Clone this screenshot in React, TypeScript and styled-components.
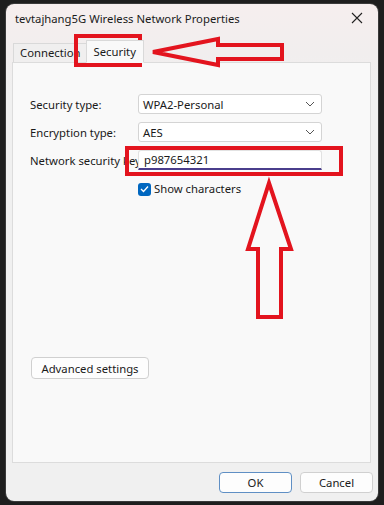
import * as React from 'react';
import styled, {createGlobalStyle} from 'styled-components';

const GlobalStyle = createGlobalStyle`
html, body {
    margin: 0;
    padding: 0;
    background: #1e1e1e;
}
body {
    font-family: "Noto Sans", "Open Sans", sans-serif;
    font-size: 11.3px;
    color: #1a1a1a;
}
`

const Screen = styled.div`
position: relative;
width: 384px;
height: 505px;
padding: 4px 6px 4px 6px;
box-sizing: border-box;
`

const Window = styled.div`
width: 372px;
height: 497px;
border-radius: 8px;
overflow: hidden;
display: flex;
flex-direction: column;
background: linear-gradient(#f6eeee 0px, #f1eeee 50px, #f0f0f0 90px);
box-shadow: 0 0 0 1px #3a3a3a;
`

const TitleBar = styled.div`
height: 28px;
display: flex;
align-items: center;
justify-content: space-between;
padding: 0 15px 0 9px;
flex-shrink: 0;
`

const Title = styled.div`
font-size: 11.3px;
color: #1b1b1b;
white-space: nowrap;
`

const TabRow = styled.div`
display: flex;
align-items: flex-end;
height: 30px;
padding-left: 7px;
flex-shrink: 0;
`

const Tab = styled.div<{active?: boolean}>`
box-sizing: border-box;
height: ${p => p.active ? 23 : 19}px;
padding: ${p => p.active ? '3px 7px 0 7px' : '1px 5px 0 6px'};
background: ${p => p.active ? '#f9f9f9' : '#f0efef'};
border: 1px solid #d9d9d9;
border-bottom: ${p => p.active ? '1px solid #f9f9f9' : 'none'};
margin-bottom: ${p => p.active ? -1 : 0}px;
margin-left: ${p => p.active ? -1 : 0}px;
position: relative;
z-index: ${p => p.active ? 1 : 0};
font-size: 11.3px;
color: #1a1a1a;
`

const Panel = styled.div`
flex: 1;
margin: 0 7px 0 6px;
background: #f9f9f9;
border: 1px solid #dcdcdc;
padding: 31px 0 0 17px;
display: flex;
flex-direction: column;
`

const Form = styled.div`
display: grid;
grid-template-columns: 108px 184px;
row-gap: 8px;
align-items: center;
`

const Label = styled.div`
white-space: nowrap;
overflow: hidden;
font-size: 11.3px;
`

const Select = styled.div`
box-sizing: border-box;
height: 20px;
background: #ffffff;
border: 1px solid #d4d4d4;
border-radius: 3px;
display: flex;
align-items: center;
justify-content: space-between;
padding: 0 6px 0 4px;
font-size: 11.3px;
`

const KeyInput = styled.div`
box-sizing: border-box;
height: 20px;
background: #ffffff;
border: 1px solid #e2e2e2;
border-bottom: 2px solid #4a3d8c;
border-radius: 3px 3px 0 0;
display: flex;
align-items: center;
padding: 0 5px;
font-size: 11.3px;
`

const CheckRow = styled.label`
display: flex;
align-items: center;
gap: 3px;
height: 16px;
line-height: 16px;
margin: 11px 0 0 108px;
font-size: 11.3px;
`

const CheckBox = styled.span`
width: 13px;
height: 13px;
border-radius: 3px;
background: #0067c0;
display: flex;
align-items: center;
justify-content: center;
`

const Button = styled.button<{primary?: boolean}>`
box-sizing: border-box;
height: 21px;
background: #fdfdfd;
border: 1px solid ${p => p.primary ? '#5f8fc4' : '#d0d0d0'};
border-radius: 4px;
font-family: "Noto Sans", "Open Sans", sans-serif;
font-size: 11.3px;
color: #1a1a1a;
padding: 0;
`

const AdvancedButton = styled(Button)`
width: 118px;
height: 22px;
margin: 160px 0 0 1px;
`

const Footer = styled.div`
height: 38px;
box-sizing: border-box;
display: flex;
justify-content: flex-end;
align-items: flex-start;
gap: 8px;
padding: 9px 5px 0 0;
flex-shrink: 0;
`

const FooterButton = styled(Button)`
width: 73px;
`

const Annotations = styled.svg`
position: absolute;
left: 0;
top: 0;
pointer-events: none;
`

function Chevron() {
    return <svg width="10" height="6" viewBox="0 0 10 6">
        <path d="M1 1 L5 5 L9 1" fill="none" stroke="#555" strokeWidth="1"/>
    </svg>
}

export default function App() {
    return <>
        <GlobalStyle/>
        <Screen>
            <Window>
                <TitleBar>
                    <Title>tevtajhang5G Wireless Network Properties</Title>
                    <svg width="12" height="12" viewBox="0 0 12 12">
                        <path d="M1 1 L11 11 M11 1 L1 11" stroke="#222" strokeWidth="1.1"/>
                    </svg>
                </TitleBar>
                <TabRow>
                    <Tab>Connection</Tab>
                    <Tab active>Security</Tab>
                </TabRow>
                <Panel>
                    <Form>
                        <Label>Security type:</Label>
                        <Select>WPA2-Personal<Chevron/></Select>
                        <Label>Encryption type:</Label>
                        <Select>AES<Chevron/></Select>
                        <Label>Network security key</Label>
                        <KeyInput>p987654321</KeyInput>
                    </Form>
                    <CheckRow>
                        <CheckBox>
                            <svg width="9" height="8" viewBox="0 0 9 8">
                                <path d="M1 4 L3.5 6.5 L8 1.5" fill="none" stroke="#fff" strokeWidth="1.3"/>
                            </svg>
                        </CheckBox>
                        Show characters
                    </CheckRow>
                    <AdvancedButton>Advanced settings</AdvancedButton>
                </Panel>
                <Footer>
                    <FooterButton primary>OK</FooterButton>
                    <FooterButton>Cancel</FooterButton>
                </Footer>
            </Window>
            <Annotations width="384" height="505" viewBox="0 0 384 505">
                <g fill="none" stroke="#e3141e" strokeWidth="4" strokeLinejoin="miter">
                    <rect x="76" y="36" width="64" height="29"/>
                    <path d="M153 52 L218 39 L218 45 L282 45 L282 59 L218 59 L218 65 Z"/>
                    <rect x="127" y="148" width="214" height="26"/>
                    <path d="M269 183 L291 249 L281 249 L281 317 L258 317 L258 249 L248 249 Z"/>
                </g>
            </Annotations>
        </Screen>
    </>
}
